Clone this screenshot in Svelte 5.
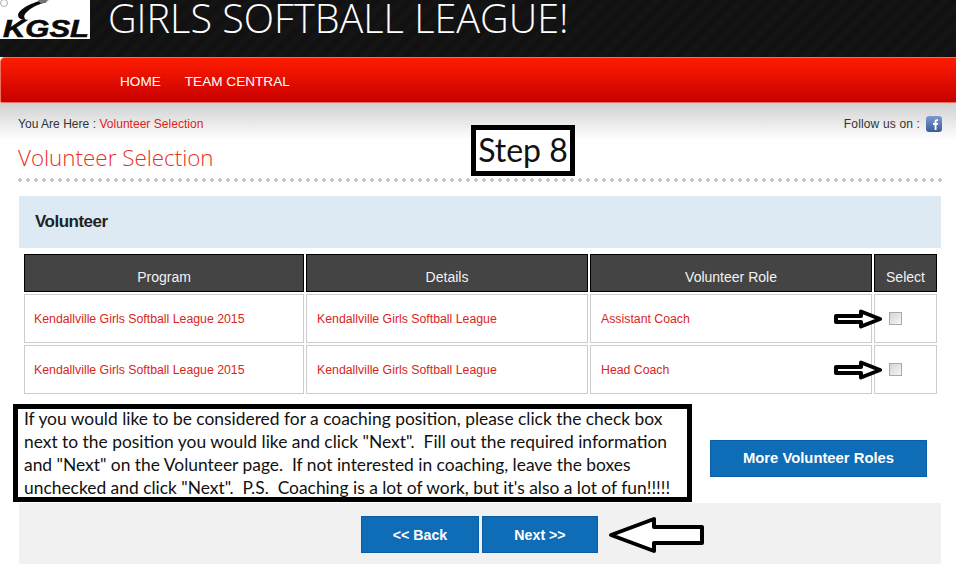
<script>
	const rows = [
		{ program: 'Kendallville Girls Softball League 2015', details: 'Kendallville Girls Softball League', role: 'Assistant Coach' },
		{ program: 'Kendallville Girls Softball League 2015', details: 'Kendallville Girls Softball League', role: 'Head Coach' }
	];
</script>

<div class="page">
	<header class="top">
		<div class="logo">
			<svg width="90" height="39" viewBox="0 0 90 39">
				<rect width="90" height="39" fill="#fff" />
				<path d="M45 0 C32 2 19 9 18 15 C18 18 21 20 26 20 C23 17 24 14 28 11 C32 7 39 4 47 2 Z" fill="#0a0a0a" />
				<circle cx="4" cy="3" r="3.5" fill="none" stroke="#999" stroke-width="0.8" />
				<path d="M38 0 L41 4 L49 0 Z" fill="#777" />
				<text x="3" y="37" textLength="86" lengthAdjust="spacingAndGlyphs" class="logo-text">KGSL</text>
			</svg>
		</div>
		<h1>GIRLS SOFTBALL LEAGUE!</h1>
	</header>

	<nav class="nav">
		<a href="#home">HOME</a>
		<a href="#team">TEAM CENTRAL</a>
	</nav>

	<div class="band">
		<div class="crumbs">You Are Here : <span class="red">Volunteer Selection</span></div>
		<div class="follow">
			Follow us on :
			<svg width="16" height="16" viewBox="0 0 16 16">
				<defs>
					<linearGradient id="fb" x1="0" y1="0" x2="0" y2="1">
						<stop offset="0" stop-color="#7d9bd0" />
						<stop offset="1" stop-color="#3a5a9c" />
					</linearGradient>
				</defs>
				<rect width="16" height="16" rx="3" fill="url(#fb)" />
				<path d="M8.6 14 V9 H7 V7 H8.6 V5.6 C8.6 4 9.5 3.2 11 3.2 H12 V5 H11.2 C10.6 5 10.5 5.3 10.5 5.8 V7 H12 L11.8 9 H10.5 V14 Z" fill="#fff" />
			</svg>
		</div>
	</div>

	<h2 class="title">Volunteer Selection</h2>
	<div class="dots"></div>

	<section class="panel"><h3>Volunteer</h3></section>

	<table>
		<thead>
			<tr>
				<th class="c1">Program</th>
				<th class="c2">Details</th>
				<th class="c3">Volunteer Role</th>
				<th class="c4">Select</th>
			</tr>
		</thead>
		<tbody>
			{#each rows as row}
				<tr>
					<td>{row.program}</td>
					<td class="shifted">{row.details}</td>
					<td class="shifted">{row.role}</td>
					<td class="check">
						<span class="pointer">
							<svg width="48" height="20" viewBox="0 0 48 20">
								<path d="M2 7 H27 V2.5 L46 10 L27 17.5 V13 H2 Z" fill="#fff" stroke="#000" stroke-width="4" stroke-linejoin="round" />
							</svg>
						</span>
						<input type="checkbox" />
					</td>
				</tr>
			{/each}
		</tbody>
	</table>

	<div class="lower">
		<p class="note">
			<span>
				If you would like to be considered for a coaching position, please click the check box<br />
				next to the position you would like and click "Next".&nbsp; Fill out the required information<br />
				and "Next" on the Volunteer page.&nbsp; If not interested in coaching, leave the boxes<br />
				unchecked and click "Next".&nbsp; P.S.&nbsp; Coaching is a lot of work, but it's also a lot of fun!!!!!
			</span>
		</p>
		<button class="btn more">More Volunteer Roles</button>
	</div>

	<div class="footer">
		<button class="btn back">&lt;&lt; Back</button>
		<button class="btn next">Next &gt;&gt;</button>
		<svg class="big-arrow" width="98" height="40" viewBox="0 0 98 40">
			<path d="M4 20 L47 4 V12 H95 V28 H47 V36 Z" fill="#fff" stroke="#000" stroke-width="4" stroke-linejoin="round" />
		</svg>
	</div>

	<div class="step">Step 8</div>
</div>

<style>
	:global(body) {
		margin: 0;
		background: #fff;
	}

	.page {
		position: relative;
		width: 956px;
		height: 564px;
		overflow: hidden;
		font-family: 'Liberation Sans', Arial, sans-serif;
		color: #333;
	}

	.top {
		display: flex;
		height: 57px;
		background: repeating-linear-gradient(135deg, #111 0 6px, #141414 6px 12px);
	}

	.logo {
		width: 90px;
		height: 39px;
		flex: none;
	}

	.logo svg {
		display: block;
		overflow: visible;
	}

	.logo-text {
		font-family: 'Liberation Sans', Arial, sans-serif;
		font-size: 24px;
		font-weight: 700;
		font-style: italic;
		fill: #0a0a0a;
		stroke: #0a0a0a;
		stroke-width: 0.6px;
	}

	h1 {
		margin: 0 0 0 18px;
		font-family: 'Open Sans', sans-serif;
		font-weight: 300;
		font-size: 39.6px;
		line-height: 36px;
		color: #fff;
		white-space: nowrap;
	}

	.nav {
		display: flex;
		align-items: center;
		gap: 24px;
		height: 42px;
		padding: 2px 0 0 119px;
		border: 1px solid #f0705f;
		border-right: 0;
		border-radius: 5px 0 0 2px;
		background: linear-gradient(#ff1c00, #c80000);
	}

	.nav a {
		color: #fff;
		font-size: 13.6px;
		text-decoration: none;
	}

	.band {
		display: flex;
		justify-content: space-between;
		align-items: center;
		height: 37px;
		padding: 5px 14px 0 18px;
		box-sizing: border-box;
		background: linear-gradient(#d0d0d0, #fff);
		font-size: 12px;
		color: #333;
	}

	.crumbs {
		letter-spacing: 0.03px;
	}

	.follow {
		display: flex;
		align-items: center;
		gap: 6px;
		letter-spacing: 0.15px;
	}

	.red {
		color: #e0211b;
	}

	.title {
		margin: 2px 0 0 18px;
		font-family: 'Open Sans', sans-serif;
		font-weight: 300;
		font-size: 22.4px;
		line-height: 32px;
		color: #e8301f;
	}

	.dots {
		height: 4px;
		margin: 4px 14px 0 18px;
		background-image: radial-gradient(circle at 2px 2px, #c8c8c8 2px, transparent 2px);
		background-size: 8px 4px;
	}

	.panel {
		height: 52px;
		margin: 14px 15px 0 19px;
		background: #deeaf3;
		display: flex;
		align-items: center;
		padding-left: 16px;
	}

	h3 {
		margin: 0;
		font-size: 17px;
		font-weight: 700;
		letter-spacing: -0.5px;
		color: #222;
	}

	table {
		border-collapse: separate;
		border-spacing: 2px;
		margin: 4px 0 0 22px;
		table-layout: fixed;
		width: 917px;
	}

	th {
		height: 30px;
		padding: 0 0 6px;
		border: 1px solid #000;
		background: #444;
		color: #f2f2f2;
		font-size: 14px;
		font-weight: 400;
		vertical-align: bottom;
		line-height: 16px;
	}

	.c1 { width: 278px; }
	.c2 { width: 280px; }
	.c3 { width: 280px; }
	.c4 { width: 61px; }

	td {
		height: 47px;
		padding: 0 0 0 9px;
		border: 1px solid #ccc;
		color: #d8261c;
		font-size: 12.3px;
	}

	td.shifted {
		padding-left: 10px;
	}

	.check {
		position: relative;
		padding: 0 0 0 14px;
	}

	.check input {
		display: block;
		appearance: none;
		box-sizing: border-box;
		width: 13px;
		height: 13px;
		margin: 0 0 1px;
		border: 1px solid #a8a8a8;
		background: linear-gradient(135deg, #d4d4d4, #f6f6f6);
	}

	.pointer {
		position: absolute;
		left: -41px;
		top: 14px;
	}

	.pointer svg {
		display: block;
	}

	.lower {
		display: flex;
		align-items: center;
		margin: 8px 0 0 13px;
	}

	.note {
		display: flex;
		align-items: center;
		box-sizing: border-box;
		width: 679px;
		height: 98px;
		margin: 0;
		padding: 0 0 0 6px;
		border: 5px solid #000;
		font-family: Lato, sans-serif;
		font-size: 17.4px;
		line-height: 23px;
		color: #111;
		white-space: nowrap;
	}

	.btn {
		border: 1px solid #0a5ea6;
		background: #0f6db7;
		color: #fff;
		font-family: 'Liberation Sans', Arial, sans-serif;
		font-weight: 700;
		font-size: 14.2px;
		padding: 0;
		cursor: pointer;
	}

	.more {
		width: 217px;
		height: 37px;
		margin: 10px 0 0 18px;
		font-size: 14.8px;
	}

	.footer {
		position: relative;
		display: flex;
		justify-content: center;
		gap: 3px;
		height: 61px;
		margin: 1px 15px 0 19px;
		padding: 13px 0 0 0;
		box-sizing: border-box;
		background: #f1f1f1;
	}

	.back {
		width: 118px;
		height: 37px;
		margin-left: -1px;
	}

	.next {
		width: 116px;
		height: 37px;
	}

	.big-arrow {
		position: absolute;
		left: 588px;
		top: 12px;
	}

	.step {
		position: absolute;
		left: 471px;
		top: 125px;
		width: 104px;
		height: 51px;
		box-sizing: border-box;
		border: 5px solid #000;
		background: #fff;
		font-family: Lato, sans-serif;
		font-size: 32px;
		line-height: 40px;
		text-align: center;
		color: #111;
	}
</style>
